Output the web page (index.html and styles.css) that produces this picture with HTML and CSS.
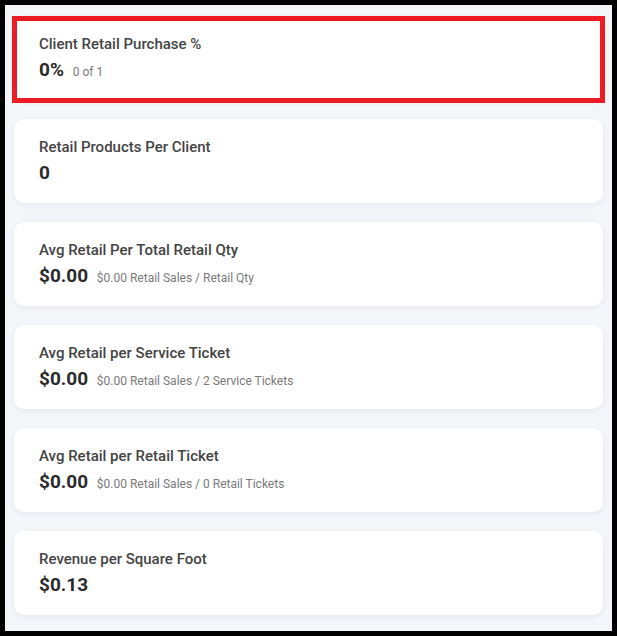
FILE: index.html
```html
<html>
<head>
    <meta charset="UTF-8">
    <title>Retail Metrics</title>
    <link rel="stylesheet" href="styles.css">
</head>
<body>
<div id="frame">
    <div class="card selected">
        <div class="title">Client Retail Purchase %</div>
        <div class="value">0% <span class="note">0 of 1</span></div>
    </div>
    <div class="card">
        <div class="title">Retail Products Per Client</div>
        <div class="value">0</div>
    </div>
    <div class="card">
        <div class="title">Avg Retail Per Total Retail Qty</div>
        <div class="value">$0.00 <span class="note">$0.00 Retail Sales / Retail Qty</span></div>
    </div>
    <div class="card">
        <div class="title">Avg Retail per Service Ticket</div>
        <div class="value">$0.00 <span class="note">$0.00 Retail Sales / 2 Service Tickets</span></div>
    </div>
    <div class="card">
        <div class="title">Avg Retail per Retail Ticket</div>
        <div class="value">$0.00 <span class="note">$0.00 Retail Sales / 0 Retail Tickets</span></div>
    </div>
    <div class="card">
        <div class="title">Revenue per Square Foot</div>
        <div class="value">$0.13</div>
    </div>
</div>
</body>
</html>
```

FILE: styles.css
```css
body {
    margin: 0;
    background-color: #000;
    font-family: Roboto, "Liberation Sans", sans-serif;
}

#frame {
    height: 636px;
    box-sizing: border-box;
    border: 5px solid #000;
    background-color: #f5f6fa;
    padding: 11px 9px 0 9px;
    display: flex;
    flex-direction: column;
    gap: 19px;
}

.card {
    position: relative;
    height: 84px;
    box-sizing: border-box;
    background-color: #fff;
    border-radius: 10px;
    box-shadow: 0 2px 6px rgba(30, 40, 90, 0.07);
    padding: 18px 25px 0 25px;
}

.selected::after {
    content: "";
    position: absolute;
    top: 0;
    left: -2px;
    right: -2px;
    bottom: -3px;
    border: 5px solid #ed1c24;
}

.title {
    font-size: 15px;
    font-weight: 500;
    color: #444;
    line-height: 20px;
}

.value {
    margin-top: 4px;
    font-size: 19px;
    font-weight: 700;
    color: #2b2b2b;
    line-height: 24px;
}

.note {
    margin-left: 4px;
    font-size: 12px;
    font-weight: 400;
    color: #7a7a7a;
}
```
